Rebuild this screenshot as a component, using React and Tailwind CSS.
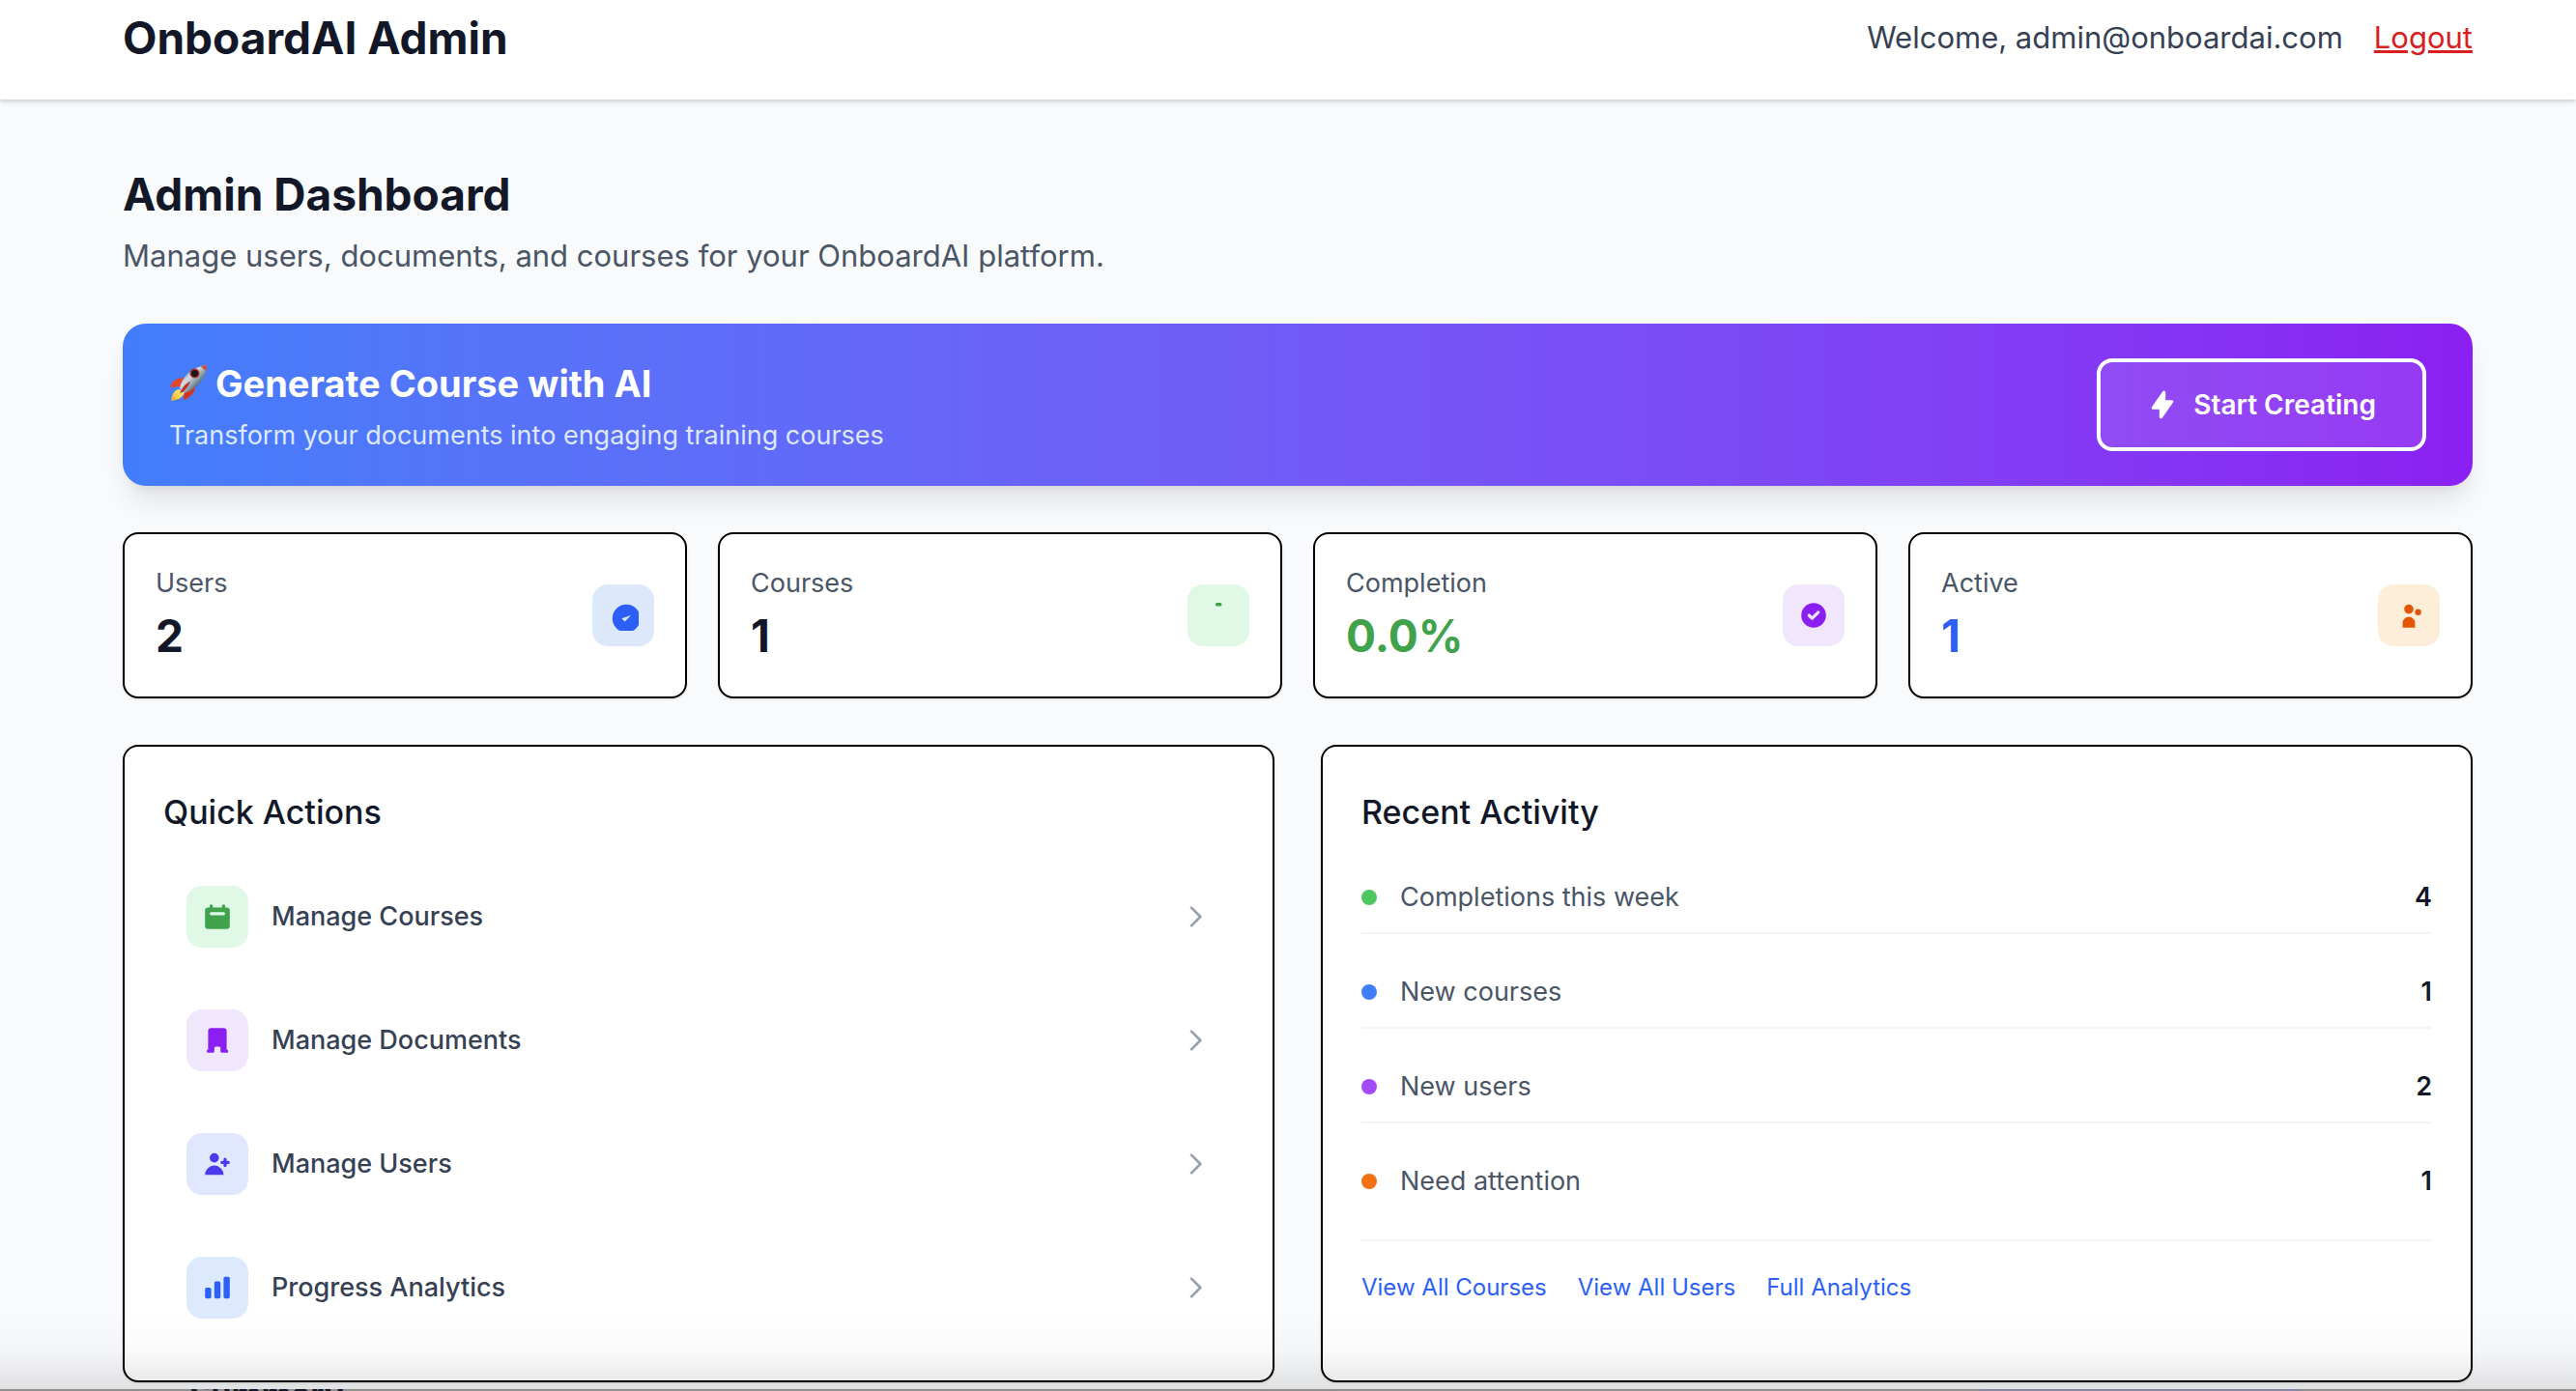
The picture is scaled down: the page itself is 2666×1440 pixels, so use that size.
import React from "react";

const SOLID = {
  bolt: "M11.3 1.046A1 1 0 0112 2v5h4a1 1 0 01.82 1.573l-7 10A1 1 0 018 18v-5H4a1 1 0 01-.82-1.573l7-10a1 1 0 011.12-.38z",
  badge: "M9 12l2 2 4-4m6 2a9 9 0 11-18 0 9 9 0 0118 0z",
  dash: "M9.100 1.900H11.100A1.100 1.100 0 0111.100 4.100H9.100A1.100 1.100 0 019.100 1.900z",
  check: "M10 18a8 8 0 100-16 8 8 0 000 16zm3.707-9.293a1 1 0 00-1.414-1.414L9 10.586 7.707 9.293a1 1 0 00-1.414 1.414l2 2a1 1 0 001.414 0l4-4z",
  people: "M13 6a3 3 0 11-6 0 3 3 0 016 0zM18 8a2 2 0 11-4 0 2 2 0 014 0zM14 15a4 4 0 00-8 0v3h8v-3z",
  calendar: "M6 2a1 1 0 00-1 1v1H4a2 2 0 00-2 2v10a2 2 0 002 2h12a2 2 0 002-2V6a2 2 0 00-2-2h-1V3a1 1 0 10-2 0v1H7V3a1 1 0 00-1-1zm0 5a1 1 0 000 2h8a1 1 0 100-2H6z",
  building: "M4 4a2 2 0 012-2h8a2 2 0 012 2v12a1 1 0 110 2h-3a1 1 0 01-1-1v-2a1 1 0 00-1-1H9a1 1 0 00-1 1v2a1 1 0 01-1 1H4a1 1 0 110-2V4z",
  userPlus: "M8 9a3 3 0 100-6 3 3 0 000 6zM8 11a6 6 0 016 6H2a6 6 0 016-6zM16 7a1 1 0 10-2 0v1h-1a1 1 0 100 2h1v1a1 1 0 102 0v-1h1a1 1 0 100-2h-1V7z",
  chart: "M2 11a1 1 0 011-1h2a1 1 0 011 1v5a1 1 0 01-1 1H3a1 1 0 01-1-1v-5zM8 7a1 1 0 011-1h2a1 1 0 011 1v9a1 1 0 01-1 1H9a1 1 0 01-1-1V7zM14 4a1 1 0 011-1h2a1 1 0 011 1v12a1 1 0 01-1 1h-2a1 1 0 01-1-1V4z",
};

function Icon({ name }) {
  return (
    <svg className="size-8 shrink-0" viewBox="0 0 20 20" fill="currentColor" aria-hidden="true">
      <path fillRule="evenodd" clipRule="evenodd" d={SOLID[name]} />
    </svg>
  );
}

function IconTile({ name, tone }) {
  return (
    <span className={"flex size-16 shrink-0 items-center justify-center rounded-2xl " + tone}>
      <Icon name={name} />
    </span>
  );
}

function Chevron() {
  return (
    <svg className="size-8 text-gray-400" viewBox="0 0 24 24" fill="none" stroke="currentColor" strokeWidth="2" strokeLinecap="round" strokeLinejoin="round" aria-hidden="true">
      <path d="M9 5l7 7-7 7" />
    </svg>
  );
}

function Rocket() {
  return (
    <svg className="size-10 shrink-0" viewBox="0 0 40 40" aria-hidden="true">
      <defs>
        <linearGradient id="hull" x1="15" y1="6" x2="32" y2="22" gradientUnits="userSpaceOnUse">
          <stop offset="0" stopColor="#5f7485" />
          <stop offset="0.4" stopColor="#d5dfe6" />
          <stop offset="0.7" stopColor="#8fa3b2" />
          <stop offset="1" stopColor="#4c5c6b" />
        </linearGradient>
        <linearGradient id="flame" x1="13" y1="27" x2="2" y2="39" gradientUnits="userSpaceOnUse">
          <stop offset="0" stopColor="#fff27a" />
          <stop offset="1" stopColor="#f0a51c" />
        </linearGradient>
      </defs>
      <path d="M16 14C10 14 3 16 1 24l12-1z" fill="#e5452b" />
      <path d="M27 20c1 7-3 14-12 17l1-11z" fill="#d4351f" />
      <path d="M10 26c-5 1-7 5-8 12 7-1 12-3 14-9z" fill="url(#flame)" />
      <path d="M11 25C13 13 23 3 39 1c0 14-10 24-23 29z" fill="url(#hull)" />
      <path d="M33 2.500C35 1.700 37 1.200 39 1c0 2-.3 4-1 6z" fill="#cf4a35" />
      <circle cx="26.500" cy="9.500" r="5" fill="#b52a1d" />
      <circle cx="26.500" cy="9.500" r="3.500" fill="#15191f" />
      <path d="M22 18c-5 2-8 6-11 12l3-1c3-3 6-6 8-11z" fill="#c52a1a" />
    </svg>
  );
}

const stats = [
  { label: "Users", value: "2", color: "text-[#121827]", icon: "badge", tone: "bg-[#dde8fb] text-[#2c5ff6]" },
  { label: "Courses", value: "1", color: "text-[#121827]", icon: "dash", tone: "bg-[#e0f9e7] text-[#40a34b]" },
  { label: "Completion", value: "0.0%", color: "text-[#40a34b]", icon: "check", tone: "bg-[#f1e7fd] text-[#8b1ff2]" },
  { label: "Active", value: "1", color: "text-[#2c5ff6]", icon: "people", tone: "bg-[#fdeeda] text-[#e45506]" },
];

const actions = [
  { label: "Manage Courses", icon: "calendar", tone: "bg-[#e0f9e7] text-[#40a34b]" },
  { label: "Manage Documents", icon: "building", tone: "bg-[#f1e7fd] text-[#8b1ff2]" },
  { label: "Manage Users", icon: "userPlus", tone: "bg-[#e0e7fe] text-[#4c39ec]" },
  { label: "Progress Analytics", icon: "chart", tone: "bg-[#dde9fc] text-[#2c5ff6]" },
];

const activity = [
  { label: "Completions this week", value: "4", dot: "bg-[#50c660]" },
  { label: "New courses", value: "1", dot: "bg-[#417efb]" },
  { label: "New users", value: "2", dot: "bg-[#a34bfb]" },
  { label: "Need attention", value: "1", dot: "bg-[#f27114]" },
];

export default function App() {
  return (
    <div className="relative h-screen overflow-hidden bg-[#f9fafc] font-['Inter','Liberation_Sans',sans-serif] text-[#121827]">
      <header className="bg-white pr-[107px] pb-8 pl-[127px] shadow-[0_2px_6px_rgba(0,0,0,0.1),0_2px_4px_rgba(0,0,0,0.1)]">
        <div className="flex h-[71px] items-center justify-between pt-2">
          <h1 className="text-[46px] font-bold">OnboardAI Admin</h1>
          <div className="flex items-center gap-8 text-[31px] text-gray-700">
            <span>Welcome, admin@onboardai.com</span>
            <button type="button" className="text-[#d8201f] underline">Logout</button>
          </div>
        </div>
      </header>

      <main className="pt-[66px] pr-[107px] pl-[127px]">
        <h2 className="text-[46px] leading-16 font-bold">Admin Dashboard</h2>
        <p className="mt-2 text-[31px] leading-12 text-gray-600">
          Manage users, documents, and courses for your OnboardAI platform.
        </p>

        <section className="mt-[46px] flex h-[168px] items-center justify-between rounded-3xl bg-linear-to-r from-[#417efb] to-[#8b1ff2] px-12 text-white shadow-[0_20px_30px_-6px_rgba(0,0,0,0.1),0_8px_12px_-8px_rgba(0,0,0,0.1)]">
          <div>
            <h3 className="flex items-center gap-2 text-[38px] leading-[60px] font-bold">
              <Rocket />
              Generate Course with AI
            </h3>
            <p className="mt-1 text-[27px] leading-10 text-[#dde8fb]">Transform your documents into engaging training courses</p>
          </div>
          <button type="button" className="flex h-24 items-center gap-4 rounded-2xl border-4 border-white bg-white/10 px-12 text-[28px] font-semibold">
            <Icon name="bolt" />
            Start Creating
          </button>
        </section>

        <section className="mt-12 grid grid-cols-4 gap-8">
          {stats.map((s) => (
            <div key={s.label} className="flex h-[172px] items-center justify-between rounded-2xl border-2 border-black bg-white px-8 shadow-sm">
              <div>
                <p className="text-[27px] leading-10 text-gray-600">{s.label}</p>
                <p className={"mt-0.5 text-[46px] leading-16 font-bold " + s.color}>{s.value}</p>
              </div>
              <IconTile name={s.icon} tone={s.tone} />
            </div>
          ))}
        </section>

        <div className="mt-12 grid grid-cols-2 gap-12">
          <section className="h-[660px] rounded-2xl border-2 border-black bg-white p-10 shadow-sm">
            <h3 className="text-[34px] leading-14 font-medium">Quick Actions</h3>
            <nav className="mt-4 flex flex-col">
              {actions.map((a) => (
                <a key={a.label} href="#" className="flex h-32 items-center px-6 text-[27px] font-medium text-gray-700">
                  <IconTile name={a.icon} tone={a.tone} />
                  <span className="ml-6 flex-1">{a.label}</span>
                  <Chevron />
                </a>
              ))}
            </nav>
          </section>

          <section className="h-[660px] rounded-2xl border-2 border-black bg-white p-10 shadow-sm">
            <h3 className="text-[34px] leading-14 font-medium">Recent Activity</h3>
            <ul className="mt-8 flex flex-col gap-8">
              {activity.map((a) => (
                <li key={a.label} className="flex h-[66px] items-center justify-between border-b-2 border-gray-100 pb-2 text-[27px] last:border-transparent">
                  <span className="flex items-center gap-6 text-gray-600">
                    <span className={"size-4 rounded-full " + a.dot} />
                    {a.label}
                  </span>
                  <span className="font-semibold">{a.value}</span>
                </li>
              ))}
            </ul>
            <div className="mt-[22px] flex gap-8 border-t-2 border-gray-100 pt-8 text-2xl text-[#2c5ff6]">
              <a href="#">View All Courses</a>
              <a href="#">View All Users</a>
              <a href="#">Full Analytics</a>
            </div>
          </section>
        </div>
      </main>

      {/* Shade cast by the window edge below, with a sliver of the next section */}
      <div className="pointer-events-none absolute inset-x-0 bottom-0">
        <div className="h-20 bg-linear-to-b from-transparent via-black/2 to-black/10" />
        <div className="flex h-0.5 justify-between overflow-hidden bg-[#909090] pr-[287px] pl-[196px]">
          <h3 className="-mt-[11px] text-[34px] leading-[34px] font-bold">Summary</h3>
          <span className="w-[330px] bg-[#8688a6]" />
        </div>
      </div>
    </div>
  );
}
